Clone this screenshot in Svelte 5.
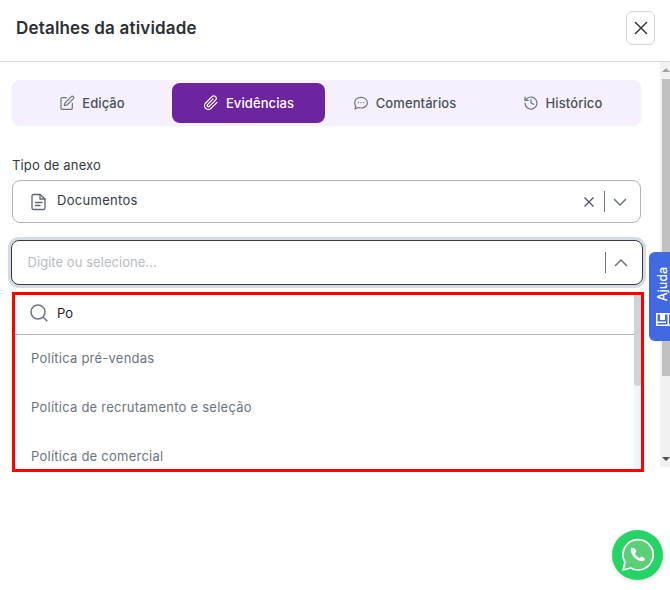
<script>
  const tabs = [
    { label: 'Edição', icon: 'edit' },
    { label: 'Evidências', icon: 'clip', active: true },
    { label: 'Comentários', icon: 'chat' },
    { label: 'Histórico', icon: 'history' }
  ];
  const options = ['Política pré-vendas', 'Política de recrutamento e seleção', 'Política de comercial'];
</script>

<div class="page">
  <header>
    <h1>Detalhes da atividade</h1>
    <button class="close" aria-label="Fechar">
      <svg width="16" height="16" viewBox="0 0 16 16"><path d="M2 2l12 12M14 2L2 14" stroke="#343a40" stroke-width="1.5" fill="none" /></svg>
    </button>
  </header>

  <div class="body">
    <main>
      <nav class="tabs">
        {#each tabs as tab}
          <button class="tab" class:active={tab.active}>
            <svg width="16" height="16" viewBox="0 0 24 24" fill="none" stroke="currentColor" stroke-width="1.8" stroke-linecap="round" stroke-linejoin="round">
              {#if tab.icon === 'edit'}
                <path d="M11 4H5a2 2 0 0 0-2 2v14a1.500 1.500 0 0 0 1.500 1.500H18a2 2 0 0 0 2-2v-7" />
                <path d="M18.500 2.500a2.100 2.100 0 0 1 3 3L12 15l-4 1 1-4z" />
              {:else if tab.icon === 'clip'}
                <path d="M21 11l-9 9a5.500 5.500 0 0 1-8-8l9.500-9.500a3.700 3.700 0 0 1 5.300 5.200l-9.300 9.300a1.800 1.800 0 0 1-2.700-2.600L15 6" />
              {:else if tab.icon === 'chat'}
                <path d="M12 3.500c5.500 0 9.500 3.500 9.500 8s-4 8-9.500 8c-1.500 0-2.800-.3-4-.7L3 21l1.300-4.300C3 15.300 2.500 13.500 2.500 11.500c0-4.500 4-8 9.500-8z" />
                <path d="M8 11.500h.01M12 11.500h.01M16 11.500h.01" stroke-width="2" />
              {:else}
                <path d="M3 12a9 9 0 1 0 3-6.700L3 8" />
                <path d="M3 3v5h5" />
                <path d="M12 7v5l4 2" />
              {/if}
            </svg>
            <span>{tab.label}</span>
          </button>
        {/each}
      </nav>

      <label class="field-label" for="tipo">Tipo de anexo</label>
      <div class="select" id="tipo">
        <svg class="doc" width="16" height="18" viewBox="0 0 16 18" fill="none" stroke="#5f6670" stroke-width="1.300" stroke-linejoin="round" stroke-linecap="round">
          <path d="M2.500 1.500h6.500l5 4.500v9a1.500 1.500 0 0 1-1.500 1.500h-10A1.500 1.500 0 0 1 1 15V3a1.500 1.500 0 0 1 1.500-1.500z" />
          <path d="M9 1.500V6h5M4.500 9.500h6.500M4.500 12.500h4.500" />
        </svg>
        <span class="value">Documentos</span>
        <svg class="clear" width="10" height="10" viewBox="0 0 10 10"><path d="M.5.500l9 9M9.500.500l-9 9" stroke="#4b5259" stroke-width="1.200" /></svg>
        <i class="sep"></i>
        <svg class="chev" width="14" height="8" viewBox="0 0 14 8" fill="none"><path d="M1 1l6 6 6-6" stroke="#6c757d" stroke-width="1.500" /></svg>
      </div>

      <div class="select focused">
        <span class="placeholder">Digite ou selecione...</span>
        <i class="sep"></i>
        <svg class="chev" width="14" height="8" viewBox="0 0 14 8" fill="none"><path d="M1 7l6-6 6 6" stroke="#6c757d" stroke-width="1.500" /></svg>
      </div>

      <div class="dropdown">
        <div class="list">
          <div class="search">
            <svg width="18" height="18" viewBox="0 0 18 18" fill="none" stroke="#6c757d" stroke-width="1.500"><circle cx="8" cy="8" r="7" /><path d="M13 13l4.300 4.300" /></svg>
            <span>Po</span>
          </div>
          {#each options as option}
            <div class="option">{option}</div>
          {/each}
        </div>
        <div class="drop-scroll"><div></div></div>
      </div>
    </main>

    <div class="page-scroll">
      <b class="up"></b>
      <div class="thumb"></div>
      <b class="down"></b>
    </div>
  </div>

  <button class="help">
    <span>Ajuda</span>
    <svg width="16" height="13" viewBox="0 0 16 13"><path d="M.8.800h14.400v11.400H.8z" fill="none" stroke="#fff" stroke-width="1.500" /><path d="M4 1h5v6H4zM11.500 1h1.500v11h-1.500zM1 8.500h9V10H1z" fill="#fff" /></svg>
  </button>

  <div class="whatsapp">
    <svg width="36" height="36" viewBox="0 0 34 34">
      <path d="M17 2.500A14.300 14.300 0 0 0 4.700 24L2.800 31.200l7.300-1.900A14.300 14.300 0 1 0 17 2.500z" fill="#5ccf78" stroke="#fff" stroke-width="1.600" stroke-linejoin="round" />
      <path d="M11.500 9.500c-.7.600-1.500 1.700-1.300 3.200.3 2.600 1.700 5 3.600 6.900 1.900 1.800 4.100 3 6.300 3.300 1.500.2 2.700-.5 3.300-1.300.3-.4.300-.9-.1-1.200l-2.400-1.700c-.4-.3-.8-.2-1.100.1l-.9 1c-.2.200-.5.200-.7.100-1.500-.8-3.400-2.600-4.200-4.200-.1-.2-.1-.5.100-.7l1-.9c.3-.3.400-.7.200-1.100l-1.600-2.300c-.3-.5-1.700-.5-2.200-.2z" fill="#fff" />
    </svg>
  </div>
</div>

<style>
  :global(body) {
    margin: 0;
    background: #fff;
  }
  .page {
    position: relative;
    width: 670px;
    height: 590px;
    overflow: hidden;
    background: #fff;
    font-family: Inter, "Noto Sans", sans-serif;
    color: #343a40;
  }
  header {
    display: flex;
    justify-content: space-between;
    align-items: center;
    height: 55px;
    padding: 0 15px 6px 16px;
    border-bottom: 1px solid #d6d6d6;
  }
  h1 {
    margin: 0;
    font-size: 17px;
    font-weight: 600;
    letter-spacing: 0.18px;
    color: #2b3035;
  }
  button {
    font: inherit;
    border: none;
    background: none;
    padding: 0;
  }
  .close {
    display: flex;
    align-items: center;
    justify-content: center;
    width: 29px;
    height: 34px;
    border: 1px solid #d0d4da;
    border-radius: 6px;
  }
  .body {
    display: flex;
    height: 405px;
  }
  main {
    flex: 1;
    padding: 18px 19px 0 12px;
    min-width: 0;
  }
  .tabs {
    display: grid;
    grid-template-columns: 160px 153px 159px 157px;
    height: 45px;
    padding: 3px 0 2px;
    box-sizing: border-box;
    background: #f6f0fc;
    border-radius: 8px;
    box-shadow: 0 1px 2px rgba(90, 40, 140, 0.08);
  }
  .tab {
    display: flex;
    align-items: center;
    justify-content: center;
    gap: 7px;
    font-size: 13px;
    font-weight: 500;
    letter-spacing: 0.1px;
    color: #495057;
    border-radius: 8px;
  }
  .tab svg {
    color: #6c757d;
  }
  .tab.active,
  .tab.active svg {
    background: #6c249f;
    color: #fff;
  }
  .field-label {
    display: block;
    margin-top: 31px;
    font-size: 13px;
    line-height: 18px;
    letter-spacing: 0.15px;
    color: #343a40;
  }
  .select {
    display: flex;
    align-items: center;
    height: 43px;
    margin-top: 6px;
    padding: 0 13px 0 18px;
    box-sizing: border-box;
    border: 1px solid #adb5bd;
    border-radius: 8px;
    font-size: 13px;
  }
  .doc {
    margin-right: 10px;
  }
  .value {
    flex: 1;
    margin-bottom: 3px;
    letter-spacing: 0.3px;
  }
  .clear {
    margin-right: 10px;
  }
  .sep {
    width: 1px;
    height: 21px;
    background: #6c757d;
    margin-right: 8px;
  }
  .chev {
    flex: none;
  }
  .select.focused {
    width: 632px;
    height: 45px;
    margin: 17px 0 0 -1px;
    padding-left: 15.500px;
    padding-right: 14px;
    border: 1.500px solid #343a40;
    box-shadow: 0 0 0 3px #d6dbe2;
  }
  .placeholder {
    flex: 1;
    margin-bottom: 1px;
    letter-spacing: 0.05px;
    color: #b6bbc1;
  }
  .dropdown {
    display: flex;
    width: 632px;
    height: 180px;
    margin-top: 7px;
    box-sizing: border-box;
    border: 3px solid #f00;
    overflow: hidden;
    background: #fff;
  }
  .list {
    flex: 1;
    min-width: 0;
  }
  .search {
    display: flex;
    align-items: center;
    gap: 9px;
    height: 40px;
    padding: 0 0 3px 15px;
    box-sizing: border-box;
    border-bottom: 1px solid #adb5bd;
    font-size: 13px;
    font-weight: 400;
    color: #212529;
  }
  .option {
    height: 49px;
    line-height: 47px;
    padding-left: 16px;
    font-size: 13px;
    letter-spacing: 0.24px;
    color: #6c757d;
  }
  .drop-scroll {
    width: 7px;
    background: #f1f4f8;
  }
  .drop-scroll div {
    height: 91px;
    background: #ced3da;
    border-radius: 0 0 4px 4px;
  }
  .page-scroll {
    position: relative;
    width: 10px;
    background: #f1f1f1;
  }
  .thumb {
    margin: 17px 0 0 2px;
    height: 297px;
    background: #c1c1c1;
  }
  .up, .down {
    position: absolute;
    left: 2px;
    border-left: 4px solid transparent;
    border-right: 4px solid transparent;
  }
  .up {
    top: 6px;
    border-bottom: 4px solid #a3a3a3;
  }
  .down {
    bottom: 6px;
    border-top: 4px solid #505050;
  }
  .help {
    position: absolute;
    left: 649px;
    top: 252px;
    width: 21px;
    height: 89px;
    display: flex;
    flex-direction: column;
    align-items: flex-start;
    gap: 12px;
    padding: 15px 0 0 7px;
    box-sizing: border-box;
    overflow: hidden;
    background: #4169e1;
    border-radius: 6px 0 0 6px;
    color: #fff;
    font-size: 12.500px;
    font-weight: 500;
  }
  .help span {
    writing-mode: vertical-rl;
    transform: rotate(180deg);
    line-height: 14px;
  }
  .help svg {
    flex: none;
  }
  .whatsapp {
    position: absolute;
    left: 612px;
    top: 530px;
    width: 51px;
    height: 50px;
    display: flex;
    align-items: center;
    justify-content: center;
    border-radius: 50%;
    background: #25d366;
    box-shadow: 0 1px 4px rgba(0, 0, 0, 0.15);
  }
</style>
